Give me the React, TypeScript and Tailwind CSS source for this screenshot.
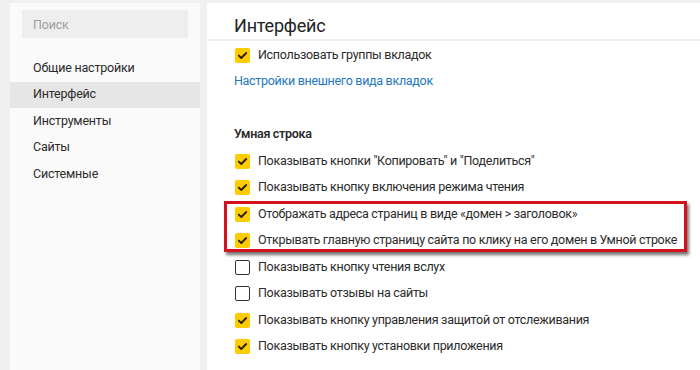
import React from "react";

const font = { fontFamily: 'Roboto, "Noto Sans", sans-serif' };

function Check({ on }: { on: boolean }) {
  if (on) {
    return (
      <span className="flex h-[15px] w-[15px] shrink-0 items-center justify-center rounded-[2px] bg-[#ffcc00]">
        <svg width="11" height="9" viewBox="0 0 11 9">
          <path d="M1.8 4.6 L4.3 7 L9.2 2" fill="none" stroke="#2a2100" strokeWidth="1.9" strokeLinecap="round" strokeLinejoin="round" />
        </svg>
      </span>
    );
  }
  return <span className="h-[15px] w-[15px] shrink-0 rounded-[2px] border-[1.5px] border-[#333] bg-white" />;
}

function Row({ on, text }: { on: boolean; text: string }) {
  return (
    <div className="flex h-[26.5px] items-center gap-[8px] pl-[28px] text-[12.5px] tracking-[-0.3px] text-[#2b2b2b]">
      <Check on={on} />
      <span className="whitespace-nowrap">{text}</span>
    </div>
  );
}

export default function App() {
  const nav = ["Общие настройки", "Интерфейс", "Инструменты", "Сайты", "Системные"];
  return (
    <div className="flex h-[370px] w-[700px] overflow-hidden bg-[#f0f0f0]" style={font}>
      <aside className="ml-[10px] mt-[3px] flex w-[190px] shrink-0 flex-col bg-[#fafafa]">
        <div className="mx-[12px] mt-[7px] flex h-[28px] items-center bg-[#eeeeee] px-[11px] pt-[2px] text-[12.5px] tracking-[-0.2px] text-[#a0a0a0]">
          Поиск
        </div>
        <nav className="mt-[17px] flex flex-col">
          {nav.map((n) => (
            <div
              key={n}
              className={`flex h-[26.5px] items-center pl-[23px] text-[12.5px] tracking-[-0.2px] text-[#2b2b2b] ${n === "Интерфейс" ? "bg-[#e6e6e6]" : ""}`}
            >
              {n}
            </div>
          ))}
        </nav>
      </aside>
      <main className="relative ml-[7px] mt-[3px] flex flex-1 flex-col bg-white">
        <div className="flex h-[38px] shrink-0 items-end border-b-2 border-[#efefef] pb-[4px] pl-[27px] text-[18px] leading-none tracking-[-0.2px] text-[#222]">
          Интерфейс
        </div>
        <div className="flex flex-col pt-[1px]">
          <Row on text="Использовать группы вкладок" />
          <div className="flex h-[26.5px] items-center pl-[27px] text-[12.5px] tracking-[-0.3px] text-[#2478c0]">
            Настройки внешнего вида вкладок
          </div>
          <div className="h-[26.5px]" />
          <div className="flex h-[26.5px] items-center pl-[27px] text-[12.5px] font-semibold tracking-[-0.3px] text-[#2b2b2b]">
            Умная строка
          </div>
          <Row on text={'Показывать кнопки "Копировать" и "Поделиться"'} />
          <Row on text="Показывать кнопку включения режима чтения" />
          <Row on text="Отображать адреса страниц в виде «домен > заголовок»" />
          <Row on text="Открывать главную страницу сайта по клику на его домен в Умной строке" />
          <Row on={false} text="Показывать кнопку чтения вслух" />
          <Row on={false} text="Показывать отзывы на сайты" />
          <Row on text="Показывать кнопку управления защитой от отслеживания" />
          <Row on text="Показывать кнопку установки приложения" />
        </div>
        <div className="pointer-events-none absolute left-[17px] top-[198px] h-[51px] w-[463px] border-[3px] border-[#d4121e] shadow-[2px_3px_3px_rgba(0,0,0,0.55)]" />
      </main>
    </div>
  );
}
